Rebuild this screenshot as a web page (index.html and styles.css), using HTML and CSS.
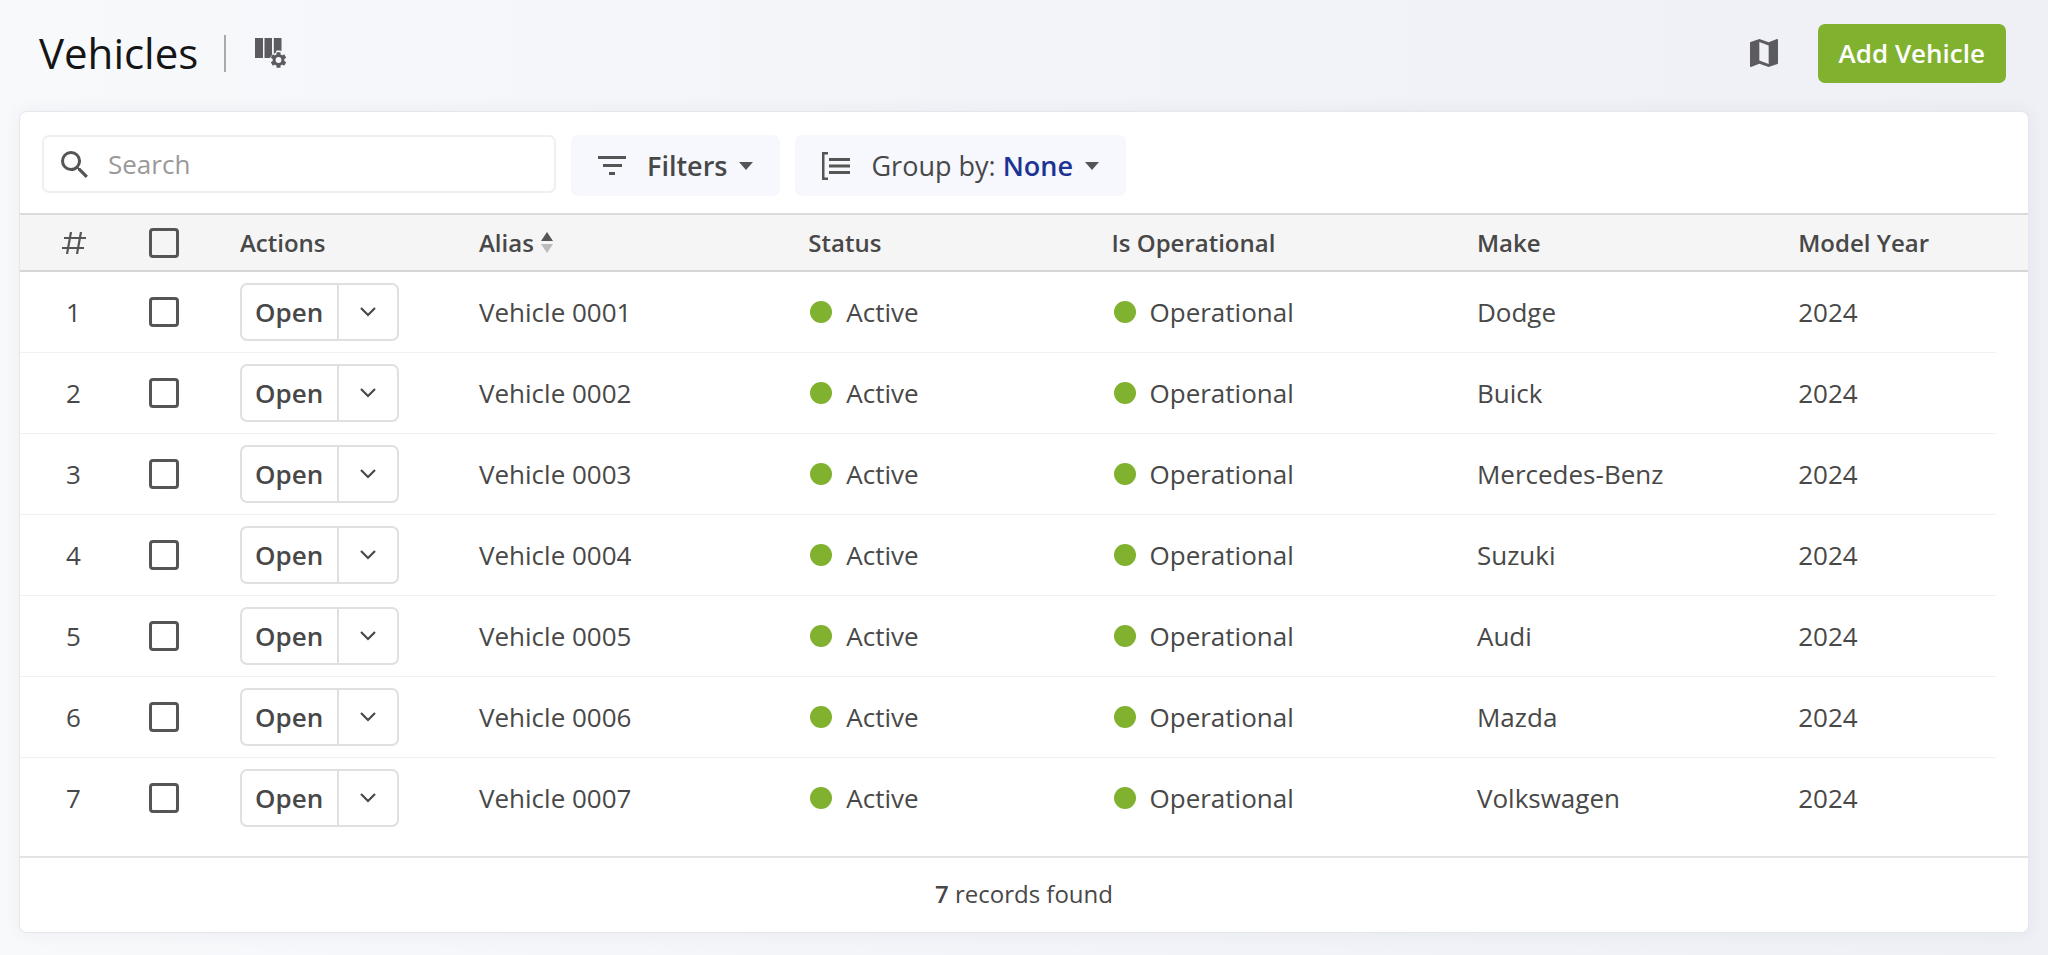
FILE: index.html
```html
<!DOCTYPE html>
<html lang="en">
<head>
<meta charset="utf-8">
<title>Vehicles</title>
<link rel="stylesheet" href="styles.css">
</head>
<body>
<svg class="sprite" aria-hidden="true">
  <symbol id="chevron" viewBox="0 0 16 10"><path d="M1 1l7 7 7-7" fill="none" stroke="currentColor" stroke-width="2.2"/></symbol>
  <symbol id="caret" viewBox="0 0 14 8"><path d="M0 0h14L7 8z"/></symbol>
</svg>

<header class="page-header">
  <h1 class="page-title">Vehicles</h1>
  <span class="divider"></span>
  <button class="icon-button" type="button" aria-label="Configure columns">
    <svg class="icon-columns" viewBox="0 0 32 30"><path d="M0 0h8v20H0zM9.500 0h7.500v17l-2 3H9.500zM18.800 0h7.700v13l-1.500-.5h-3.500l-1 2.500-1.700.8z"/><circle cx="23.500" cy="22" r="4.400" fill="none" stroke="currentColor" stroke-width="3"/><path d="M23.500 14.200V17M23.500 27v2.800M30.200 18.100l-2.400 1.400M16.800 25.900l2.400-1.400M16.800 18.100l2.400 1.400M30.200 25.900l-2.400-1.400" fill="none" stroke="currentColor" stroke-width="4"/></svg>
  </button>
  <div class="header-actions">
    <button class="icon-button" type="button" aria-label="Show map">
      <svg class="icon-map" viewBox="3 3 18 18"><path d="m20.500 3-.16.03L15 5.100 9 3 3.360 4.900c-.21.070-.36.25-.36.480V20.500c0 .28.220.500.500.500l.160-.030L9 18.900l6 2.100 5.640-1.900c.21-.070.360-.25.360-.480V3.500c0-.28-.22-.5-.5-.5zM15 19l-6-2.110V5l6 2.110V19z"/></svg>
    </button>
    <button class="primary-button" type="button">Add Vehicle</button>
  </div>
</header>

<main class="card">
  <div class="toolbar">
    <label class="search">
      <svg class="icon-search" viewBox="3 3 17.500 17.500"><path d="M15.500 14h-.79l-.28-.27A6.470 6.470 0 0 0 16 9.500 6.500 6.500 0 1 0 9.500 16c1.610 0 3.090-.59 4.230-1.570l.27.28v.79l5 4.990L20.490 19l-4.990-5zm-6 0C7.010 14 5 11.990 5 9.500S7.010 5 9.500 5 14 7.010 14 9.500 11.990 14 9.500 14z"/></svg>
      <input class="search-input" type="search" placeholder="Search" aria-label="Search">
    </label>
    <button class="tool-button" type="button">
      <svg class="icon-filter" viewBox="0 0 28 20"><path d="M0 0h28v3H0zM5 8h19v3H5zM11 16h6v3h-6z"/></svg>
      <span class="tool-strong">Filters</span>
      <svg class="icon-caret"><use href="#caret"/></svg>
    </button>
    <button class="tool-button" type="button">
      <svg class="icon-group" viewBox="0 0 28 28"><path d="M0 0h6v2.500H2.500v23H6V28H0zM7 6h21v3H7zM7 12.500h21v3H7zM7 19h21v3H7z"/></svg>
      <span>Group by: <b class="tool-value">None</b></span>
      <svg class="icon-caret"><use href="#caret"/></svg>
    </button>
  </div>

  <table class="grid">
    <colgroup>
      <col class="col-index"><col class="col-check"><col class="col-actions"><col class="col-alias"><col class="col-status"><col class="col-operational"><col class="col-make"><col class="col-year"><col class="col-gutter">
    </colgroup>
    <thead>
      <tr>
        <th class="center" scope="col" aria-label="Row number"><svg class="icon-hash" viewBox="0 0 24 22"><path d="M9 0 5 22M19 0l-4 22M2 6h22M0 16h22" fill="none" stroke="currentColor" stroke-width="2.200"/></svg></th>
        <th class="center"><input class="check" type="checkbox" aria-label="Select all"></th>
        <th scope="col">Actions</th>
        <th scope="col"><span class="sortable">Alias <svg class="icon-sort" viewBox="0 0 12 21"><path d="M6 0l6 9H0z"/><path class="sort-down" d="M0 12h12l-6 9z"/></svg></span></th>
        <th scope="col">Status</th>
        <th scope="col">Is Operational</th>
        <th scope="col">Make</th>
        <th scope="col">Model Year</th>
        <td class="gutter"></td>
      </tr>
    </thead>
    <tbody id="rows"></tbody>
  </table>

  <footer class="card-footer"><b>7</b> records found</footer>
</main>
<script src="rows.js"></script>
</body>
</html>
```

FILE: styles.css
```css
* { box-sizing: border-box; }

body {
  margin: 0;
  min-height: 100vh;
  padding: 0 19px 24px;
  font-family: "Open Sans", sans-serif;
  font-size: 26px;
  line-height: 36px;
  color: #484848;
  background: linear-gradient(90deg, #f8f9fb, #f3f4f9 50%, #eff0f6);
}

button, input { font: inherit; color: inherit; }
button { cursor: pointer; }
svg { display: block; flex: none; fill: currentColor; }
b { font-weight: 600; }
.sprite { display: none; }

.page-header {
  display: flex;
  align-items: center;
  height: 111px;
  padding: 0 23px 5px 20px;
}
.page-title {
  margin: 0;
  font-size: 42px;
  line-height: 60px;
  font-weight: 400;
  color: #151515;
}
.divider {
  width: 2px;
  height: 37px;
  margin: 0 29px 0 26px;
  background: #aaa;
}
.icon-button {
  padding: 0;
  border: 0;
  background: none;
  color: #5c5c60;
}
.icon-columns { width: 32px; height: 30px; }
.icon-map { width: 28px; height: 28px; }
.header-actions {
  display: flex;
  align-items: center;
  gap: 40px;
  margin-left: auto;
}
.primary-button {
  height: 59px;
  padding: 0 21px;
  border: 0;
  border-radius: 7px;
  background: #80b230;
  color: #fff;
  font-weight: 600;
}

.card {
  border: 1px solid #e6e7eb;
  border-radius: 8px;
  background: #fff;
  box-shadow: 0 0 18px rgba(40, 50, 80, 0.06);
  overflow: hidden;
}

.toolbar {
  display: flex;
  gap: 15px;
  padding: 23px 22px 17px;
}
.search {
  display: flex;
  align-items: center;
  gap: 20px;
  flex: 0 1 514px;
  height: 58px;
  padding: 0 17px;
  border: 2px solid #efefef;
  border-radius: 7px;
}
.icon-search { width: 27px; height: 27px; color: #555; }
.search-input {
  width: 100%;
  min-width: 0;
  padding: 0;
  border: 0;
  outline: 0;
  background: none;
}
.search-input::placeholder { color: #999; opacity: 1; }
.tool-button {
  display: flex;
  align-items: center;
  height: 61px;
  padding: 0 27px;
  border: 0;
  border-radius: 7px;
  background: #f7f8fd;
  font-size: 27px;
  white-space: nowrap;
}
.tool-strong { font-weight: 600; }
.tool-value { color: #1d3494; }
.icon-filter, .icon-group { margin-right: 21px; color: #555; }
.icon-filter { width: 28px; height: 20px; }
.icon-group { width: 28px; height: 28px; }
.icon-caret { width: 14px; height: 8px; margin-left: 12px; color: #555; }

.grid {
  width: 100%;
  table-layout: fixed;
  border-collapse: separate;
  border-spacing: 0;
}
.col-index { width: 107px; }
.col-check { width: 73px; }
.col-actions { width: 239px; }
.col-alias { width: 16.4%; }
.col-status { width: 15.1%; }
.col-operational { width: 18.2%; }
.col-make { width: 16%; }
.col-gutter { width: 32px; }

.grid th, .grid td {
  padding: 0 0 0 40px;
  text-align: left;
  font-weight: 400;
}
.grid thead th, .grid thead td {
  height: 59px;
  border-top: 2px solid #dadada;
  border-bottom: 2px solid #d6d6d6;
  background: #f5f5f5;
  font-size: 24px;
  font-weight: 600;
}
.grid tbody td {
  height: 81px;
  border-bottom: 1px solid #f1f1f1;
}
.grid tbody tr:last-child td, .grid tbody .gutter { border-bottom-color: transparent; }
.grid .center { padding: 0; text-align: center; }
.grid .gutter { padding: 0; }
.icon-hash { width: 24px; height: 22px; margin: 0 auto; color: #555; }
.check {
  appearance: none;
  display: block;
  width: 30px;
  height: 30px;
  margin: 0 auto;
  border: 3px solid #555;
  border-radius: 4px;
}
.check:checked { background: #555; }
.sortable { display: flex; align-items: center; gap: 7px; }
.icon-sort { width: 12px; height: 21px; color: #555; }
.sort-down { fill: #b9bbbe; }

.split {
  display: inline-flex;
  vertical-align: middle;
  height: 58px;
  border: 2px solid #e0e0e0;
  border-radius: 7px;
}
.split-main {
  padding: 0 14px 0 13px;
  border: 0;
  background: none;
  font-weight: 600;
}
.split-menu {
  display: flex;
  align-items: center;
  padding: 0 21px;
  border: 0;
  border-left: 2px solid #e0e0e0;
  background: none;
}
.icon-chevron { width: 16px; height: 10px; }

.state { display: flex; align-items: center; gap: 14px; }
.state::before {
  content: "";
  width: 22px;
  height: 22px;
  margin-left: 2px;
  border-radius: 50%;
  background: #80b230;
}

.card-footer {
  margin-top: 17px;
  padding: 18px 0 20px;
  border-top: 2px solid #e3e3e3;
  font-size: 24px;
  text-align: center;
}
```

FILE: rows.js
```js
const makes = ["Dodge", "Buick", "Mercedes-Benz", "Suzuki", "Audi", "Mazda", "Volkswagen"];

document.getElementById("rows").innerHTML = makes.map((make, i) => {
  const n = i + 1;
  const alias = "Vehicle " + String(n).padStart(4, "0");
  return `<tr>
    <td class="center">${n}</td>
    <td class="center"><input class="check" type="checkbox" aria-label="Select ${alias}"></td>
    <td><span class="split">
      <button class="split-main" type="button">Open</button>
      <button class="split-menu" type="button" aria-label="More actions for ${alias}"><svg class="icon-chevron"><use href="#chevron"/></svg></button>
    </span></td>
    <td>${alias}</td>
    <td><span class="state">Active</span></td>
    <td><span class="state">Operational</span></td>
    <td>${make}</td>
    <td>2024</td>
    <td class="gutter"></td>
  </tr>`;
}).join("");
```
